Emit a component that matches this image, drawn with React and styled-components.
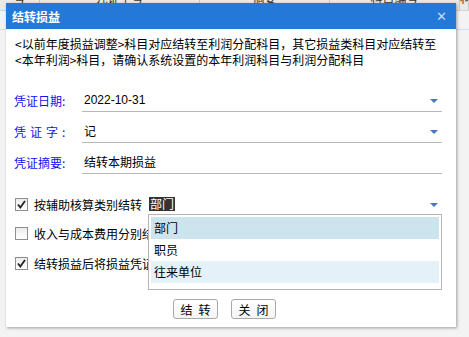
import React from 'react';
import styled, { createGlobalStyle } from 'styled-components';

const GlobalStyle = createGlobalStyle`
  html, body {
    margin: 0;
    padding: 0;
    background: #f0f0f0;
    font-family: "Noto Sans CJK SC", "Liberation Sans", sans-serif;
    font-size: 12px;
    color: #000;
  }
`;

/* 뒤쪽 그리드 (대화상자 뒤에 깔린 표) */
const Page = styled.div`
  position: relative;
  width: 469px;
  height: 337px;
  overflow: hidden;
  background: #f3f3f3;
`;

const GridHeader = styled.div`
  display: grid;
  grid-template-columns: 40px 160px 130px 130px 1fr;
  height: 10px;
  background: #e9e9e9;
  border-bottom: 1px solid #d4d4d4;
  overflow: hidden;
`;

const HeadCell = styled.div`
  border-right: 1px solid #c8c8c8;
  text-align: center;
  line-height: 14px;
  margin-top: -9px;
  color: #333;
  white-space: nowrap;
  overflow: hidden;
`;

const GridRow = styled.div`
  height: 18px;
  border-bottom: 1px solid #cfe0f2;
`;

/* 대화상자 */
const Dialog = styled.div`
  position: absolute;
  left: 6px;
  top: 3px;
  width: 450px;
  height: 324px;
  background: #fff;
  box-shadow: 1px 1px 3px rgba(0, 0, 0, 0.35);
  display: flex;
  flex-direction: column;
`;

const TitleBar = styled.div`
  height: 26px;
  background: #2479d8;
  display: flex;
  align-items: center;
  justify-content: space-between;
  padding: 0 9px 0 6px;
  color: #fff;
  font-weight: bold;
  font-size: 12px;
`;

const Close = styled.span`
  color: #c9d9ee;
  font-size: 13px;
  font-weight: bold;
  font-family: "DejaVu Sans", sans-serif;
`;

const Body = styled.div`
  flex: 1;
  display: flex;
  flex-direction: column;
  padding: 7px 14px 0 8px;
  position: relative;
`;

const Notice = styled.p`
  margin: 0 0 0 1px;
  line-height: 16px;
  font-size: 12px;
`;

const FormRow = styled.div`
  display: flex;
  align-items: center;
  height: 22px;
  margin-top: ${p => p.$top || 9}px;
`;

const Label = styled.div`
  width: 68px;
  color: #1010ee;
  letter-spacing: ${p => (p.$spread ? '4px' : '0')};
`;

const Field = styled.div`
  flex: 1;
  height: 100%;
  display: flex;
  align-items: center;
  justify-content: space-between;
  border-bottom: 1px solid #b9b9b9;
  padding: 0 4px 0 2px;
  font-family: ${p => (p.$latin ? '"Liberation Sans", sans-serif' : 'inherit')};
`;

const Arrow = styled.span`
  width: 0;
  height: 0;
  border-left: 4px solid transparent;
  border-right: 4px solid transparent;
  border-top: 4px solid #4a77c0;
  margin-top: 2px;
`;

const CheckRow = styled.div`
  display: flex;
  align-items: center;
  height: 20px;
  margin-top: ${p => p.$top || 10}px;
  padding-left: 1px;
  position: relative;
`;

const Box = styled.span`
  width: 13px;
  height: 13px;
  box-sizing: border-box;
  border: 1px solid #8e8f8f;
  background: linear-gradient(#ececec, #fff);
  margin-right: 6px;
  display: inline-flex;
  align-items: center;
  justify-content: center;
  flex: none;
`;

const CheckText = styled.span`
  white-space: nowrap;
`;

const SelectBox = styled.div`
  flex: 1;
  margin-left: 7px;
  display: flex;
  align-items: center;
  justify-content: space-between;
  padding-right: 4px;
`;

const Picked = styled.span`
  background: #333;
  color: #fff;
  padding: 0 1px;
  line-height: 14px;
`;

const List = styled.div`
  position: absolute;
  left: 142px;
  top: 185px;
  width: 294px;
  height: 76px;
  box-sizing: border-box;
  border: 1px solid #b5b5b5;
  background: #fff;
  padding: 2px 2px;
  display: flex;
  flex-direction: column;
  z-index: 2;
`;

const Item = styled.div`
  height: 22px;
  line-height: 22px;
  padding-left: 3px;
  background: ${p => p.$bg || 'transparent'};
`;

const Buttons = styled.div`
  display: flex;
  justify-content: center;
  gap: 13px;
  margin-top: 26px;
  padding-right: 7px;
`;

const Button = styled.button`
  width: 45px;
  height: 20px;
  box-sizing: border-box;
  border: 1px solid #a9a9a9;
  border-radius: 3px;
  background: linear-gradient(#fff, #f4f4f4);
  font-family: inherit;
  font-size: 12px;
  padding: 0;
  letter-spacing: 6px;
  text-indent: 6px;
  color: #000;
`;

const Tick = () => (
  <svg width="11" height="11" viewBox="0 0 11 11">
    <path d="M2 5.5 L4.3 8.5 L9 2" fill="none" stroke="#222" strokeWidth="1.8" />
  </svg>
);

export default function App() {
  return (
    <Page>
      <GlobalStyle />
      <GridHeader>
        <HeadCell>号</HeadCell>
        <HeadCell>凭证字号</HeadCell>
        <HeadCell>摘要</HeadCell>
        <HeadCell>科目编号</HeadCell>
        <HeadCell>科目名称</HeadCell>
      </GridHeader>
      <GridRow />
      <Dialog>
        <TitleBar>
          <span>结转损益</span>
          <Close>✕</Close>
        </TitleBar>
        <Body>
          <Notice>
            &lt;以前年度损益调整&gt;科目对应结转至利润分配科目，其它损益类科目对应结转至&lt;本年利润&gt;科目，请确认系统设置的本年利润科目与利润分配科目
          </Notice>
          <FormRow $top={21}>
            <Label>凭证日期:</Label>
            <Field $latin>
              <span>2022-10-31</span>
              <Arrow />
            </Field>
          </FormRow>
          <FormRow>
            <Label $spread>凭证字:</Label>
            <Field>
              <span>记</span>
              <Arrow />
            </Field>
          </FormRow>
          <FormRow>
            <Label>凭证摘要:</Label>
            <Field>
              <span>结转本期损益</span>
            </Field>
          </FormRow>
          <CheckRow $top={21}>
            <Box><Tick /></Box>
            <CheckText>按辅助核算类别结转</CheckText>
            <SelectBox>
              <Picked>部门</Picked>
              <Arrow />
            </SelectBox>
          </CheckRow>
          <CheckRow $top={9}>
            <Box />
            <CheckText>收入与成本费用分别结转</CheckText>
          </CheckRow>
          <CheckRow $top={10}>
            <Box><Tick /></Box>
            <CheckText>结转损益后将损益凭证</CheckText>
          </CheckRow>
          <List>
            <Item $bg="#cde3ee">部门</Item>
            <Item>职员</Item>
            <Item $bg="#e4f1f8">往来单位</Item>
          </List>
          <Buttons>
            <Button>结转</Button>
            <Button>关闭</Button>
          </Buttons>
        </Body>
      </Dialog>
    </Page>
  );
}
